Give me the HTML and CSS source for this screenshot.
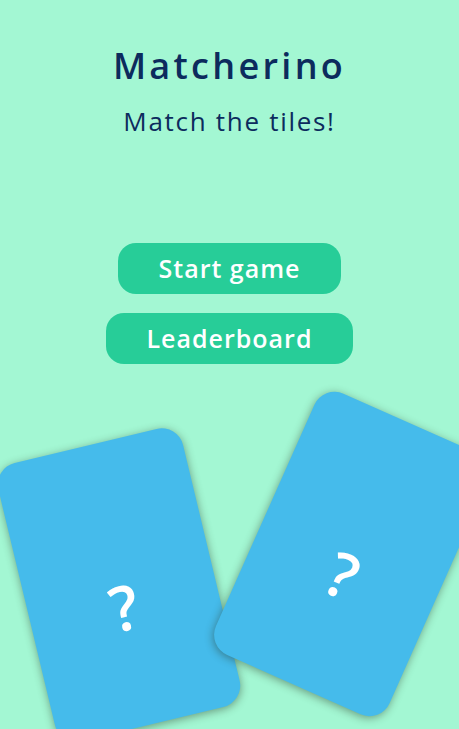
FILE: index.html
```html
<!DOCTYPE html>
<html lang="en">
<head>
<meta charset="utf-8">
<title>Matcherino</title>
<link rel="stylesheet" href="styles.css">
</head>
<body>
<main class="screen">
  <header class="hero">
    <h1 class="title">Matcherino</h1>
    <p class="subtitle">Match the tiles!</p>
  </header>
  <nav class="menu">
    <button class="btn">Start game</button>
    <button class="btn">Leaderboard</button>
  </nav>
  <div class="cards">
    <div class="card card-left"><span class="mark">?</span></div>
    <div class="card card-right"><span class="mark">?</span></div>
  </div>
</main>
</body>
</html>
```

FILE: styles.css
```css
* { box-sizing: border-box; }
html, body {
  margin: 0;
  padding: 0;
  height: 100%;
  overflow: hidden;
  background: #a3f7d3;
}
.screen {
  height: 729px;
  display: flex;
  flex-direction: column;
  align-items: center;
  font-family: "Open Sans", "Noto Sans", sans-serif;
  padding-top: 44px;
}
.hero {
  display: flex;
  flex-direction: column;
  align-items: center;
}
.title {
  margin: 0;
  font-size: 36px;
  line-height: 44px;
  font-weight: 600;
  letter-spacing: 3.3px;
  color: #0c2b5d;
}
.subtitle {
  margin: 17px 0 0;
  font-size: 26px;
  line-height: 32px;
  font-weight: 400;
  letter-spacing: 1.7px;
  color: #0c2b5d;
}
.menu {
  margin-top: 106px;
  display: flex;
  flex-direction: column;
  align-items: center;
  gap: 19px;
}
.btn {
  height: 51px;
  padding: 0 41px;
  border: none;
  border-radius: 18px;
  background: #27cd98;
  color: #ffffff;
  font-family: "Open Sans", "Noto Sans", sans-serif;
  font-size: 25px;
  font-weight: 600;
  letter-spacing: 1px;
  line-height: 51px;
}
.cards {
  position: relative;
  align-self: stretch;
  flex: 1;
  overflow: hidden;
}
.card {
  position: absolute;
  width: 190px;
  height: 286px;
  border-radius: 22px;
  background: #45bbeb;
  box-shadow: 0 2px 9px rgba(40, 50, 30, 0.45);
  display: flex;
  justify-content: center;
  align-items: center;
  padding-top: 44px;
}
.card-left {
  left: 24px;
  top: 78px;
  transform: rotate(-13.5deg);
}
.card-right {
  left: 257px;
  top: 47px;
  transform: rotate(24deg);
}
.mark {
  color: #ffffff;
  font-family: "Open Sans", "Noto Sans", sans-serif;
  font-weight: 600;
  font-size: 62px;
  line-height: 1;
}
```
